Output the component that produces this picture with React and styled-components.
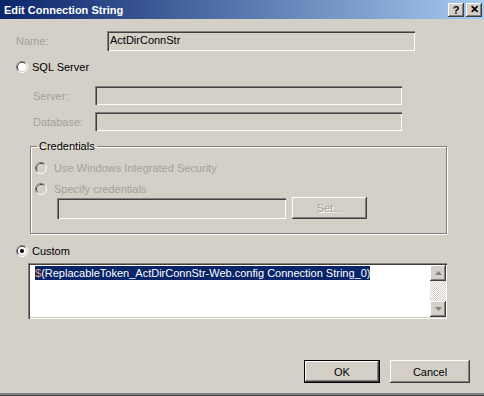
import React from "react";
import styled, { createGlobalStyle } from "styled-components";

const Global = createGlobalStyle`
  html, body {
    margin: 0;
    padding: 0;
    background: #d4d0c8;
  }
  body {
    font-family: "Liberation Sans", Arial, sans-serif;
    font-size: 11px;
  }
`;

const Window = styled.div`
  width: 484px;
  height: 396px;
  box-sizing: border-box;
  background: #d4d0c8;
  border-bottom: 1px solid #404040;
  box-shadow: inset 0 -2px 0 #808080;
  display: flex;
  flex-direction: column;
  overflow: hidden;
`;

const TitleBar = styled.div`
  height: 19px;
  flex: none;
  display: flex;
  align-items: center;
  padding: 0 2px 0 4px;
  background: linear-gradient(to right, #0a246a, #a6caf0);
  color: #fff;
  font-weight: bold;
  font-size: 11px;
`;

const TitleText = styled.div`
  flex: 1;
  white-space: nowrap;
`;

const TitleButtons = styled.div`
  display: flex;
  gap: 2px;
`;

const TitleButton = styled.div`
  width: 16px;
  height: 14px;
  box-sizing: border-box;
  background: #d4d0c8;
  color: #000;
  font-weight: bold;
  font-size: 11px;
  display: flex;
  align-items: center;
  justify-content: center;
  box-shadow: inset -1px -1px 0 #404040, inset 1px 1px 0 #fff,
    inset -2px -2px 0 #808080;
`;

const Body = styled.div`
  flex: 1;
  display: flex;
  flex-direction: column;
  padding-left: 16px;
`;

const Row = styled.div`
  display: flex;
  align-items: center;
  margin-top: ${(p) => p.$top || 0}px;
  padding-left: ${(p) => p.$indent || 0}px;
`;

const Label = styled.div`
  width: ${(p) => p.$w}px;
  color: ${(p) => (p.$disabled ? "#a3a09a" : "#000")};
  white-space: nowrap;
`;

const Input = styled.div`
  width: ${(p) => p.$w}px;
  height: ${(p) => p.$h || 19}px;
  box-sizing: border-box;
  background: #d4d0c8;
  box-shadow: inset 1px 1px 0 #808080, inset 2px 2px 0 #404040,
    inset -1px -1px 0 #fff, inset -2px -2px 0 #d4d0c8;
  padding: 3px 3px 0;
  color: #000;
  white-space: nowrap;
`;

const RadioSvg = styled.svg`
  flex: none;
  width: 12px;
  height: 12px;
  margin-right: ${(p) => p.$gap}px;
`;

const Radio = ({ checked, disabled, gap = 5 }) => (
  <RadioSvg viewBox="0 0 12 12" $gap={gap}>
    <path d="M2.11 9.89 A5.5 5.5 0 0 1 9.89 2.11" fill="none" stroke="#808080" />
    <path d="M9.89 2.11 A5.5 5.5 0 0 1 2.11 9.89" fill="none" stroke="#fff" />
    <path d="M2.82 9.18 A4.5 4.5 0 0 1 9.18 2.82" fill="none" stroke="#404040" />
    <path d="M9.18 2.82 A4.5 4.5 0 0 1 2.82 9.18" fill="none" stroke="#d4d0c8" />
    <circle cx="6" cy="6" r="4" fill={disabled ? "#d4d0c8" : "#fff"} />
    {checked && <circle cx="6" cy="6" r="2" fill="#000" />}
  </RadioSvg>
);

const RadioText = styled.span`
  color: ${(p) => (p.$disabled ? "#a3a09a" : "#000")};
  white-space: nowrap;
`;

const Group = styled.fieldset`
  margin: 9px 0 0 14px;
  width: 417px;
  height: 94px;
  box-sizing: border-box;
  padding: 0;
  border: 1px solid #808080;
  box-shadow: 1px 1px 0 #fff, inset 1px 1px 0 #fff;
`;

const Legend = styled.legend`
  margin-left: 6px;
  padding: 0 2px;
  color: #000;
  line-height: 12px;
`;

const Button = styled.div`
  width: ${(p) => p.$w}px;
  height: ${(p) => p.$h || 23}px;
  box-sizing: border-box;
  background: #d4d0c8;
  display: flex;
  align-items: center;
  justify-content: center;
  color: ${(p) => (p.$disabled ? "#a3a09a" : "#000")};
  text-shadow: ${(p) => (p.$disabled ? "1px 1px 0 #fff" : "none")};
  border: ${(p) => (p.$default ? "1px solid #000" : "none")};
  box-shadow: inset -1px -1px 0 #404040, inset 1px 1px 0 #fff,
    inset -2px -2px 0 #808080;
`;

const TextArea = styled.div`
  margin: 6px 0 0 12px;
  width: 419px;
  height: 56px;
  box-sizing: border-box;
  background: #fff;
  display: flex;
  padding: 2px 1px 2px 2px;
  box-shadow: inset 1px 1px 0 #808080, inset 2px 2px 0 #404040,
    inset -1px -1px 0 #fff, inset -2px -2px 0 #d4d0c8;
`;

const TextContent = styled.div`
  flex: 1;
  padding: 1px 0 0 5px;
  font-size: 11px;
  line-height: 15px;
`;

const Selected = styled.span`
  background: #0a246a;
  color: #fff;
  white-space: nowrap;
  padding: 1px 0;
`;

const Caret = styled.span`
  color: #e8a060;
`;

const ScrollBar = styled.div`
  width: 16px;
  display: flex;
  flex-direction: column;
  background-color: #fff;
  background-image: conic-gradient(
    #d4d0c8 25%,
    #fff 0 50%,
    #d4d0c8 0 75%,
    #fff 0
  );
  background-size: 2px 2px;
`;

const ScrollButton = styled.div`
  width: 16px;
  height: 16px;
  box-sizing: border-box;
  background: #d4d0c8;
  display: flex;
  align-items: center;
  justify-content: center;
  box-shadow: inset -1px -1px 0 #404040, inset 1px 1px 0 #fff,
    inset -2px -2px 0 #808080;
`;

const Track = styled.div`
  flex: 1;
`;

const Arrow = ({ down }) => (
  <svg width="7" height="4" viewBox="0 0 7 4">
    <path d={down ? "M0 0 H7 L3.5 4 Z" : "M0 4 H7 L3.5 0 Z"} fill="#808080" />
  </svg>
);

const Footer = styled.div`
  margin-top: auto;
  margin-bottom: 12px;
  display: flex;
  justify-content: flex-end;
  gap: 10px;
  padding-right: 14px;
`;

export default function App() {
  return (
    <Window>
      <Global />
      <TitleBar>
        <TitleText>Edit Connection String</TitleText>
        <TitleButtons>
          <TitleButton>?</TitleButton>
          <TitleButton>✕</TitleButton>
        </TitleButtons>
      </TitleBar>
      <Body>
        <Row $top={12}>
          <Label $w={91} $disabled>Name:</Label>
          <Input $w={308} $h={20}>ActDirConnStr</Input>
        </Row>
        <Row $top={10}>
          <Radio gap={4} />
          <RadioText>SQL Server</RadioText>
        </Row>
        <Row $top={13} $indent={17}>
          <Label $w={62} $disabled>Server:</Label>
          <Input $w={307} />
        </Row>
        <Row $top={7} $indent={17}>
          <Label $w={62} $disabled>Database:</Label>
          <Input $w={307} />
        </Row>
        <Group>
          <Legend>Credentials</Legend>
          <Row $top={10} $indent={4}>
            <Radio disabled gap={7} />
            <RadioText $disabled>Use Windows Integrated Security</RadioText>
          </Row>
          <Row $top={9} $indent={4}>
            <Radio disabled gap={7} />
            <RadioText $disabled>Specify credentials</RadioText>
          </Row>
          <Row $top={2} $indent={26}>
            <Input $w={229} $h={21} />
            <Button $w={75} $h={22} $disabled style={{ marginLeft: 6 }}>
              Set...
            </Button>
          </Row>
        </Group>
        <Row $top={11}>
          <Radio checked gap={4} />
          <RadioText>Custom</RadioText>
        </Row>
        <TextArea>
          <TextContent>
            <Selected>
              <Caret>$</Caret>(ReplacableToken_ActDirConnStr-Web.config Connection String_0)
            </Selected>
          </TextContent>
          <ScrollBar>
            <ScrollButton>
              <Arrow />
            </ScrollButton>
            <Track />
            <ScrollButton>
              <Arrow down />
            </ScrollButton>
          </ScrollBar>
        </TextArea>
      </Body>
      <Footer>
        <Button $w={76} $default>OK</Button>
        <Button $w={80}>Cancel</Button>
      </Footer>
    </Window>
  );
}
